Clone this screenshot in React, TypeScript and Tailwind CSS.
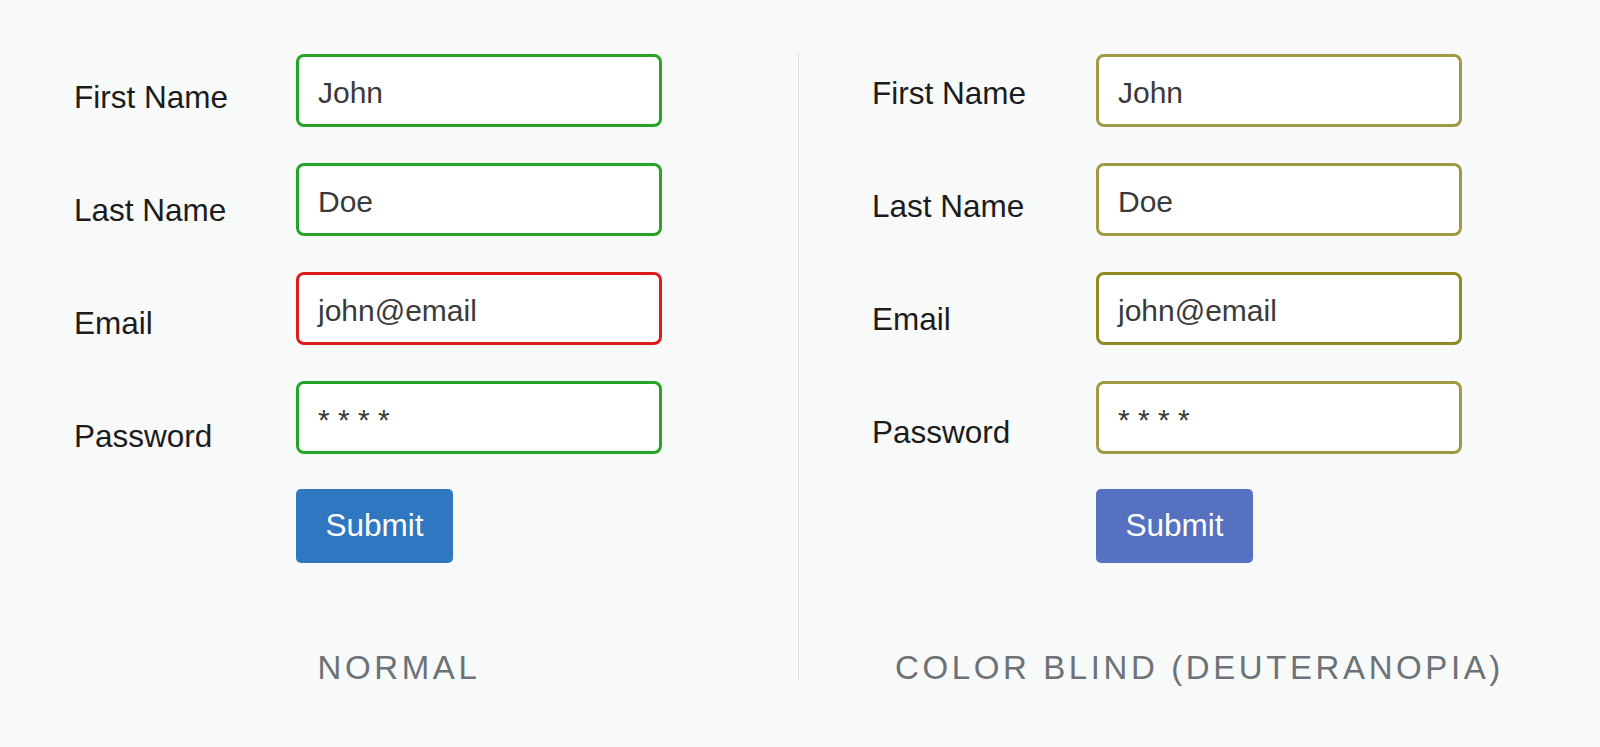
import React from "react";

type Field = { label: string; value: string; border: string };

const font = { fontFamily: '"Liberation Sans", Arial, sans-serif' } as const;

function Panel({
  fields,
  button,
  caption,
  labelPad,
  labelTop,
  labelWidth,
}: {
  fields: Field[];
  button: string;
  caption: string;
  labelPad: string;
  labelTop: string;
  labelWidth: string;
}) {
  return (
    <div className="flex flex-col pt-[54px]">
      <div className={`flex flex-row ${labelPad}`}>
        <div className={`flex flex-col gap-[77px] ${labelTop} ${labelWidth}`}>
          {fields.map((f) => (
            <div key={f.label} className="text-[31.5px] leading-[36px] text-[#1c1c1c]">
              {f.label}
            </div>
          ))}
        </div>
        <div className="flex flex-col gap-9 w-[366px]">
          {fields.map((f) => (
            <div
              key={f.label}
              className={`h-[73px] w-[366px] rounded-[8px] border-[3px] bg-white pl-[19px] pt-[18px] ${f.border}`}
            >
              <div className="text-[30px] leading-[36px] text-[#3a3a3a]">{f.value}</div>
            </div>
          ))}
          <div className={`mt-[-1px] flex h-[74px] w-[157px] items-center justify-center rounded-[5px] text-[31.5px] text-white ${button}`}>
            Submit
          </div>
        </div>
      </div>
      <div className="mt-[85px] text-center text-[33px] leading-[40px] tracking-[3.6px] text-[#6c7277]">
        {caption}
      </div>
    </div>
  );
}

export default function App() {
  const normal: Field[] = [
    { label: "First Name", value: "John", border: "border-[#27a427]" },
    { label: "Last Name", value: "Doe", border: "border-[#27a427]" },
    { label: "Email", value: "john@email", border: "border-[#de1b1b]" },
    { label: "Password", value: "* * * *", border: "border-[#27a427]" },
  ];
  const cb: Field[] = [
    { label: "First Name", value: "John", border: "border-[#a19a44]" },
    { label: "Last Name", value: "Doe", border: "border-[#a19a44]" },
    { label: "Email", value: "john@email", border: "border-[#8f8a22]" },
    { label: "Password", value: "* * * *", border: "border-[#a19a44]" },
  ];
  return (
    <div className="flex h-[747px] w-full flex-row bg-[#f8f9f9]" style={font}>
      <div className="w-[798px]">
        <Panel
          fields={normal}
          button="bg-[#2f78c1]"
          caption="NORMAL"
          labelPad="pl-[74px]"
          labelTop="pt-[25px]"
          labelWidth="w-[222px]"
        />
      </div>
      <div className="mt-[53px] h-[627px] w-px bg-[#dedede]" />
      <div className="flex-1">
        <Panel
          fields={cb}
          button="bg-[#5571bf]"
          caption="COLOR BLIND (DEUTERANOPIA)"
          labelPad="pl-[73px]"
          labelTop="pt-[21px]"
          labelWidth="w-[224px]"
        />
      </div>
    </div>
  );
}
